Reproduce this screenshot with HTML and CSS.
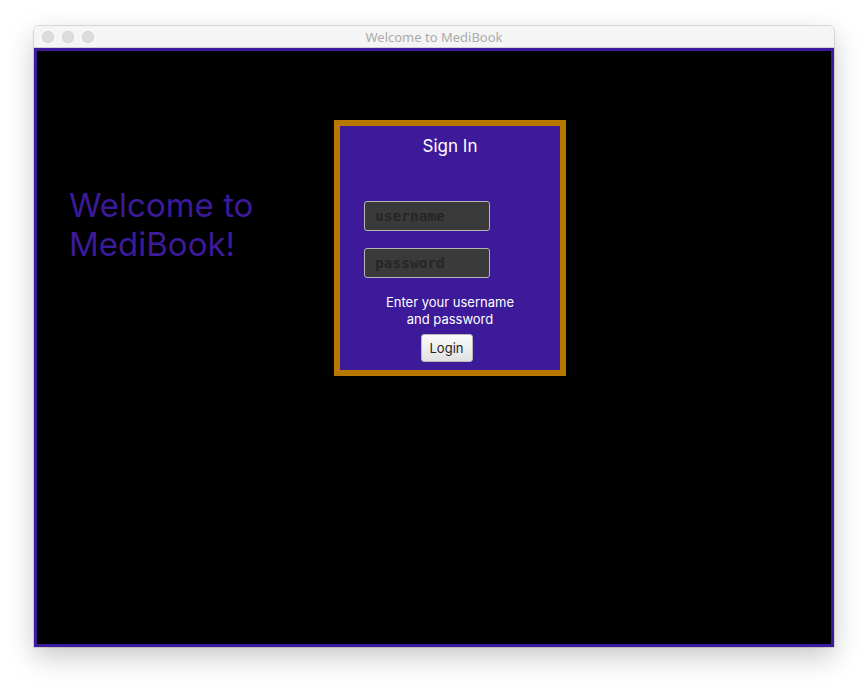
FILE: index.html
```html
<!DOCTYPE html>
<html>
<head>
<meta charset="utf-8">
<link rel="stylesheet" href="styles.css">
</head>
<body>
<div class="window">
  <div class="titlebar">
    <div class="lights"><span class="light"></span><span class="light"></span><span class="light"></span></div>
    <div class="title">Welcome to MediBook</div>
  </div>
  <div class="content">
    <div class="welcome">Welcome to<br>MediBook!</div>
    <div class="card">
      <div class="signin">Sign In</div>
      <div class="fields">
        <input class="field" type="text" placeholder="username">
        <input class="field" type="password" placeholder="password">
      </div>
      <div class="hint">Enter your username<br>and password</div>
      <button class="login">Login</button>
    </div>
  </div>
</div>
</body>
</html>
```

FILE: styles.css
```css
html, body { margin: 0; padding: 0; background: #ffffff; }
body { font-family: Inter, "Noto Sans", "Liberation Sans", sans-serif; min-height: 690px; padding-top: 26px; box-sizing: border-box; }
.window {
  margin: 0 0 0 34px;
  width: 800px;
  border-radius: 5px 5px 0 0;
  box-shadow: 0 0 0 1px rgba(0,0,0,0.12), 0 10px 28px rgba(0,0,0,0.22);
  overflow: hidden;
}
.titlebar {
  height: 21px;
  background: #f5f5f5;
  border-bottom: 1px solid #d2d2d2;
  position: relative;
  display: flex;
  align-items: center;
  justify-content: center;
}
.lights { position: absolute; left: 8px; top: 5px; display: flex; gap: 8px; }
.light { width: 12px; height: 12px; border-radius: 50%; background: #dcdcdc; box-shadow: inset 0 0 0 0.5px #cfcfcf; }
.title { font-size: 13px; color: #ababab; font-family: "Noto Sans", "Liberation Sans", sans-serif; }
.content {
  height: 599px;
  box-sizing: border-box;
  background: #000;
  border: 3px solid #3c1a9a;
  display: flex;
  align-items: flex-start;
  padding: 69px 0 0 32px;
}
.welcome {
  width: 265px;
  margin-top: 66px;
  font-size: 33px;
  line-height: 39px;
  color: #3c1a9a;
}
.card {
  width: 220px;
  height: 244px;
  flex-shrink: 0;
  background: #3c1a9a;
  border: 6px solid #b87700;
  display: flex;
  flex-direction: column;
  align-items: center;
}
.signin {
  margin-top: 10px;
  font-size: 17px;
  line-height: 20px;
  color: #fff;
}
.fields {
  align-self: stretch;
  padding-left: 24px;
  margin-top: 45px;
  display: flex;
  flex-direction: column;
  gap: 17px;
}
.field {
  width: 126px;
  height: 30px;
  box-sizing: border-box;
  margin: 0;
  background: #3a3a3a;
  border: 1px solid #b5b5b5;
  border-radius: 3px;
  padding: 0 10px;
  font-family: "DejaVu Sans Mono", monospace;
  font-weight: bold;
  font-size: 14.5px;
  color: #222;
  outline: none;
}
.field::placeholder { color: #262626; }
.hint {
  margin-top: 16px;
  font-size: 13px;
  line-height: 17px;
  color: #fff;
  text-align: center;
}
.login {
  margin-top: 6px;
  margin-left: -7px;
  width: 52px;
  height: 28px;
  padding: 0;
  font-family: Inter, "Noto Sans", sans-serif;
  font-size: 13px;
  color: #222;
  background: linear-gradient(#fbfbfb, #e0e0e0);
  border: 1px solid #b8b8b8;
  border-radius: 3px;
}
```
